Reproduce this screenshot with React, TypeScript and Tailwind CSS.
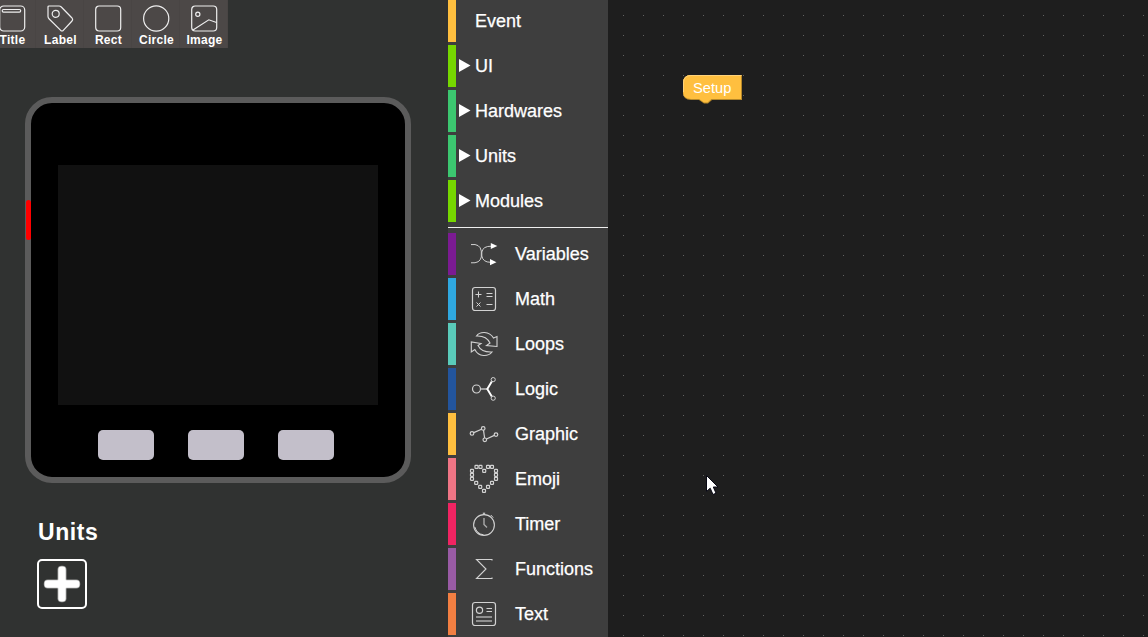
import type { ReactNode } from "react";

type Tool = { label: string; icon: ReactNode };

const tools: Tool[] = [
  {
    label: "Title",
    icon: (
      <>
        <rect x=".7" y="1" width="25" height="25" rx="4" />
        <rect x="3.2" y="4.5" width="18.5" height="2.6" rx="1.3" />
      </>
    ),
  },
  {
    label: "Label",
    icon: (
      <>
        <path d="M2 1H12Q13.3 1 14.3 2L25 13Q26.2 14.5 25 16L16.3 25.4Q15 26.4 13.7 25.4L2.2 14Q1 12.8 1 11.5V2Q1 1 2 1Z" />
        <circle cx="8.7" cy="8.8" r="3.5" />
      </>
    ),
  },
  { label: "Rect", icon: <rect x=".7" y="1" width="25" height="25" rx="3.5" /> },
  { label: "Circle", icon: <circle cx="13.2" cy="13.5" r="12.6" /> },
  {
    label: "Image",
    icon: (
      <>
        <rect x=".7" y="1" width="25" height="25" rx="3.5" />
        <circle cx="6.8" cy="9.3" r="2.1" />
        <path d="M2 25L17.8 14.8L25.5 17.5" />
      </>
    ),
  },
];

const groups = [
  { label: "Event", bar: "bg-[#ffbf3f]", open: false },
  { label: "UI", bar: "bg-[#76d700]", open: true },
  { label: "Hardwares", bar: "bg-[#3cc770]", open: true },
  { label: "Units", bar: "bg-[#3cc770]", open: true },
  { label: "Modules", bar: "bg-[#76d700]", open: true },
];

const heartDots: [number, number][] = [
  [6.5, 1.8], [10.5, 1.8], [18, 1.8], [22, 1.8], [2, 5.8], [2, 9.8], [2, 13.8], [14.2, 5.8],
  [26, 5.8], [26, 9.8], [26, 13.8], [6.2, 17.8], [22, 17.8], [10.2, 21.8], [18, 21.8], [14, 25.8],
];

const categories: { label: string; bar: string; icon: ReactNode }[] = [
  {
    label: "Variables",
    bar: "bg-[#7b1b92]",
    icon: (
      <>
        <path d="M1 4.6Q10 3.4 11.3 11V17Q10 23.6 1 22.8M21.5 6.2Q13 6 11.8 12V16Q13 22.3 20.5 22.3" />
        <path d="M20.8 3L27.3 6L20.8 9ZM20 19L26.5 22.2L20 25.2Z" fill="white" stroke="none" />
      </>
    ),
  },
  {
    label: "Math",
    bar: "bg-[#2fa8e0]",
    icon: (
      <>
        <rect x="2.5" y="2.5" width="23" height="23" rx="2.5" strokeWidth="1.2" />
        <path d="M5.5 9.5H11.5M8.5 6.5V12.5M16.5 8.5H22.5M16.5 11.5H22.5M16.5 19.5H22.5M6.5 17.5L10.5 21.5M10.5 17.5L6.5 21.5" />
      </>
    ),
  },
  {
    label: "Loops",
    bar: "bg-[#5acbba]",
    icon: (
      <path
        strokeWidth="1.1"
        d="M6.5 6Q9 2.3 14.5 2.5Q20.5 3 23.5 8L27 6.5V16.5L16.5 15.5L20 13Q16.5 5.5 6.5 6ZM22 22Q19 25.8 13.5 25.5Q7.5 25 4.8 19.5L1.3 22V12L11 13.5L8 15.5Q11.5 22.5 22 22Z"
      />
    ),
  },
  {
    label: "Logic",
    bar: "bg-[#23559d]",
    icon: (
      <>
        <circle cx="6.5" cy="14" r="4" strokeWidth="1.2" />
        <path d="M10.5 14H17" strokeWidth="1.3" />
        <path d="M21.8 6.4L17.3 14L21.8 21.6" strokeWidth="1.9" stroke="white" />
        <circle cx="23.2" cy="4.6" r="2.1" />
        <circle cx="23.2" cy="23.2" r="2.1" />
      </>
    ),
  },
  {
    label: "Graphic",
    bar: "bg-[#ffbf3f]",
    icon: (
      <g strokeWidth="1.2">
        <circle cx="2" cy="13.4" r="1.8" />
        <circle cx="13.2" cy="8.4" r="1.8" />
        <circle cx="14.8" cy="19.8" r="1.8" />
        <circle cx="26" cy="14.6" r="1.8" />
        <path d="M3.8 12.6L11.5 9.2M13.5 10.2L14.6 18M16.5 19L24.3 15.4" />
      </g>
    ),
  },
  {
    label: "Emoji",
    bar: "bg-[#ef7585]",
    icon: (
      <g strokeWidth="1.2">
        {heartDots.map(([x, y]) => (
          <rect key={`${x}-${y}`} x={x - 1.5} y={y - 1.5} width="3" height="3" rx=".6" />
        ))}
      </g>
    ),
  },
  {
    label: "Timer",
    bar: "bg-[#f02462]",
    icon: (
      <>
        <circle cx="14" cy="15" r="10.4" strokeWidth="1.1" />
        <path d="M12.8 3.2H15.2M14 3V5M20.8 5L23.2 7.6" />
        <path d="M4.8 17Q7 24 13.5 24.8" />
        <path d="M14 8V14.5L17 17.5" strokeWidth="1.4" stroke="#aaa" />
      </>
    ),
  },
  {
    label: "Functions",
    bar: "bg-[#995ba5]",
    icon: <path strokeWidth="1.1" d="M22 5.5V4.5H6.5L16 14L6.5 23.5H22V22.5" />,
  },
  {
    label: "Text",
    bar: "bg-[#f27f42]",
    icon: (
      <>
        <rect x="2.5" y="2.5" width="23" height="23" rx="2.5" strokeWidth="1.2" />
        <circle cx="9.5" cy="10.3" r="3.1" strokeWidth="1.2" />
        <path d="M16.5 8.5H22M16.5 11.5H22" />
        <path d="M6 17H22M6 21H22" strokeWidth="1.6" stroke="#aaa" />
      </>
    ),
  },
];

function Toolbar() {
  return (
    <div className="-ml-3 flex h-12 w-60 bg-[#4c4847]">
      {tools.map((tool) => (
        <div
          key={tool.label}
          className="flex w-12 flex-col items-center border-r border-[#494544] pt-[5px] pl-px"
        >
          <svg width="27" height="27" viewBox="0 0 27 27" fill="none" stroke="#eee" strokeWidth="1.2">
            {tool.icon}
          </svg>
          <span className="pl-px text-xs leading-4 font-bold tracking-[0.3px]">{tool.label}</span>
        </div>
      ))}
    </div>
  );
}

function Device() {
  return (
    <div className="relative mt-[49px] ml-[25px] flex h-[386px] w-[386px] flex-col rounded-[27px] border-6 border-[#5b5b5b] bg-black pt-[62px] pl-[27px]">
      <div className="absolute top-[97px] -left-[5px] h-10 w-[5px] rounded-[3px] bg-[#ff0000]" />
      <div className="h-60 w-80 bg-[#111111]" />
      <div className="mt-[25px] ml-10 flex gap-[34px]">
        <div className="h-[30px] w-14 rounded-[5px] bg-[#c3bfca]" />
        <div className="h-[30px] w-14 rounded-[5px] bg-[#c3bfca]" />
        <div className="h-[30px] w-14 rounded-[5px] bg-[#c3bfca]" />
      </div>
    </div>
  );
}

function Designer() {
  return (
    <section className="flex w-[448px] shrink-0 flex-col bg-[#303231]">
      <Toolbar />
      <Device />
      <h2 className="mt-[34px] ml-[38px] text-[23px] leading-[30px] font-bold tracking-[0.6px]">Units</h2>
      <button className="mt-3 ml-[37px] flex size-[50px] items-center justify-center rounded-[5px] border-2 border-white">
        <svg width="40" height="40" viewBox="0 0 40 40" fill="white">
          <rect x="1.8" y="15.5" width="36.4" height="9" rx="4" opacity=".5" />
          <rect x="15.5" y="1.8" width="9" height="36.4" rx="4" opacity=".5" />
          <rect x="2.5" y="16.3" width="35" height="7.4" rx="3.2" />
          <rect x="16.3" y="2.5" width="7.4" height="35" rx="3.2" />
        </svg>
      </button>
    </section>
  );
}

function Toolbox() {
  return (
    <nav className="flex w-40 shrink-0 flex-col bg-[#3e3e3e] text-lg leading-[42px] [-webkit-text-stroke:0.25px_white]">
      <div className="flex flex-col gap-[3px]">
        {groups.map((group) => (
          <div key={group.label} className="flex h-[42px]">
            <div className={`w-2 ${group.bar}`} />
            <div className="flex w-[19px] items-center pb-px pl-[3px]">
              {group.open && (
                <svg width="12" height="13" viewBox="0 0 12 13" fill="white">
                  <path d="M0 0L11.5 6.5L0 13Z" />
                </svg>
              )}
            </div>
            <span>{group.label}</span>
          </div>
        ))}
      </div>
      <div className="mt-[5px] mb-[5px] h-px shrink-0 bg-[#eeeeee]" />
      <div className="flex flex-col gap-[3px]">
        {categories.map((category) => (
          <div key={category.label} className="flex h-[42px]">
            <div className={`w-2 ${category.bar}`} />
            <svg
              className="mt-[7px] mr-[17px] ml-[14px] overflow-visible"
              width="28"
              height="28"
              viewBox="0 0 28 28"
              fill="none"
              stroke="#d2d2d2"
              strokeWidth="1"
            >
              {category.icon}
            </svg>
            <span>{category.label}</span>
          </div>
        ))}
      </div>
    </nav>
  );
}

function Workspace() {
  return (
    <main className="relative flex-1 bg-[#1e1e1e]">
      <svg className="block size-full">
        <defs>
          <pattern id="grid" width="20" height="20" patternUnits="userSpaceOnUse">
            <rect x="15" y="15" width="1" height="1" fill="#636363" />
          </pattern>
        </defs>
        <rect width="100%" height="100%" fill="url(#grid)" />
      </svg>
      <div className="absolute top-[75px] left-[75px] h-[29px] w-[60px]">
        <svg className="absolute inset-0" width="60" height="29" viewBox="0 0 60 29">
          <path d="M8 0H59V25H29L25 28.5H21L16 25H8Q0 25 0 17V8Q0 0 8 0Z" fill="#b58729" />
          <path d="M8 0H58V24H28.5L24.5 27.5H21L16 24H8Q0 24 0 17V8Q0 0 8 0Z" fill="#ffbf3f" />
          <path d="M.5 17V8Q.5 .5 8 .5H58.5" fill="none" stroke="#ffd27a" />
        </svg>
        <span className="relative block pl-[10px] text-[14.67px] leading-[26px] text-white">Setup</span>
      </div>
      <svg className="absolute top-[474px] left-[97px]" width="15" height="22" viewBox="0 0 15 22">
        <path
          d="M1.5 1.5V17.5L5.2 14.2L8 20.5L11 19.2L8.3 13H13Z"
          fill="white"
          stroke="#080814"
          strokeWidth="1"
        />
      </svg>
    </main>
  );
}

export default function App() {
  return (
    <div className="flex h-[637px] w-[1148px] overflow-hidden font-['Liberation_Sans',Arial,sans-serif] text-white">
      <Designer />
      <Toolbox />
      <Workspace />
    </div>
  );
}
